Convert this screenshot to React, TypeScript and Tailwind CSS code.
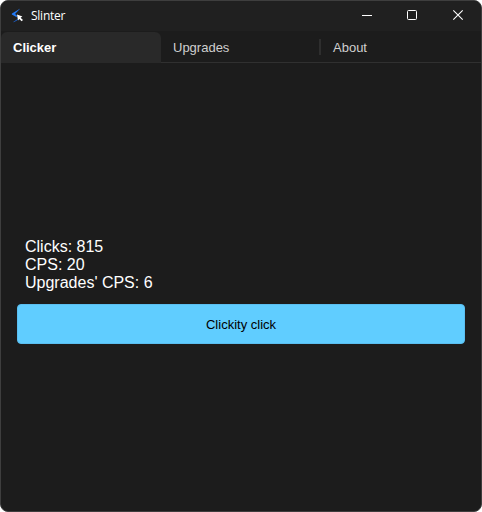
function Logo() {
  return (
    <svg width="16" height="16" viewBox="0 0 16 16" aria-hidden="true">
      <path d="M11.3.6 3 5.4Q2.3 6.1 3.2 6.8L7.8 9.2V7.2L6 6.1Z" fill="#2379f4" />
      <path d="M4.2 13.9 9.6 10.2 9.2 11.8 4.8 14.3Z" fill="#1d62d0" />
      <path d="M8 6.6 13.4 8.4 11.6 9.7 14 12 12.6 13.3 10.3 11 9 12.4Z" fill="#fff" />
    </svg>
  );
}

function TitleBar() {
  return (
    <header className="flex h-[30px] shrink-0 items-center bg-[#202020] pl-2">
      <Logo />
      <h1 className="ml-[6px] flex-1 font-['Open_Sans','Noto_Sans',sans-serif] text-[12px] leading-4 tracking-[-0.25px] text-white">
        Slinter
      </h1>
      <svg width="137" height="30" viewBox="0 0 137 30" fill="none" stroke="#fff" aria-hidden="true">
        <path d="M18 14.5h10" />
        <rect x="63.5" y="9.5" width="9" height="9" rx="1" />
        <path d="m109.3 9.3 9.4 9.4m0-9.4-9.4 9.4" strokeWidth="1.1" />
      </svg>
    </header>
  );
}

function Tabs() {
  return (
    <nav className="flex h-8 shrink-0 items-end border-b border-[#303030] bg-[#1c1c1c] text-[13px] text-[#cfcfcf]">
      <button className="-mb-px h-[31px] w-40 rounded-t-[6px] bg-[#292929] pl-3 text-left font-bold text-white">
        Clicker
      </button>
      <button className="flex h-[30px] w-40 items-center justify-between pl-3">
        <span className="pt-px">Upgrades</span>
        <span className="h-4 w-[2px] bg-[#2e2e2e]" />
      </button>
      <button className="h-[30px] flex-1 pl-[12px] pt-px text-left">About</button>
    </nav>
  );
}

export default function App() {
  return (
    <div className="h-[512px] w-[482px] bg-white font-['Liberation_Sans',Arial,sans-serif]">
      <div className="flex h-full flex-col overflow-hidden rounded-[8px] border border-[#3e3e3e] bg-[#1c1c1c]">
        <TitleBar />
        <Tabs />
        <main className="flex flex-1 flex-col justify-center px-4 pt-[7px] text-white">
          <div className="px-2 text-[16px] leading-[18px]">
            <p>Clicks: 815</p>
            <p>CPS: 20</p>
            <p>Upgrades' CPS: 6</p>
          </div>
          <button className="mt-3 h-10 rounded-[4px] border border-[#5abef0] bg-[#60cdff] pt-[2px] text-[13px] text-black">
            Clickity click
          </button>
        </main>
      </div>
    </div>
  );
}
